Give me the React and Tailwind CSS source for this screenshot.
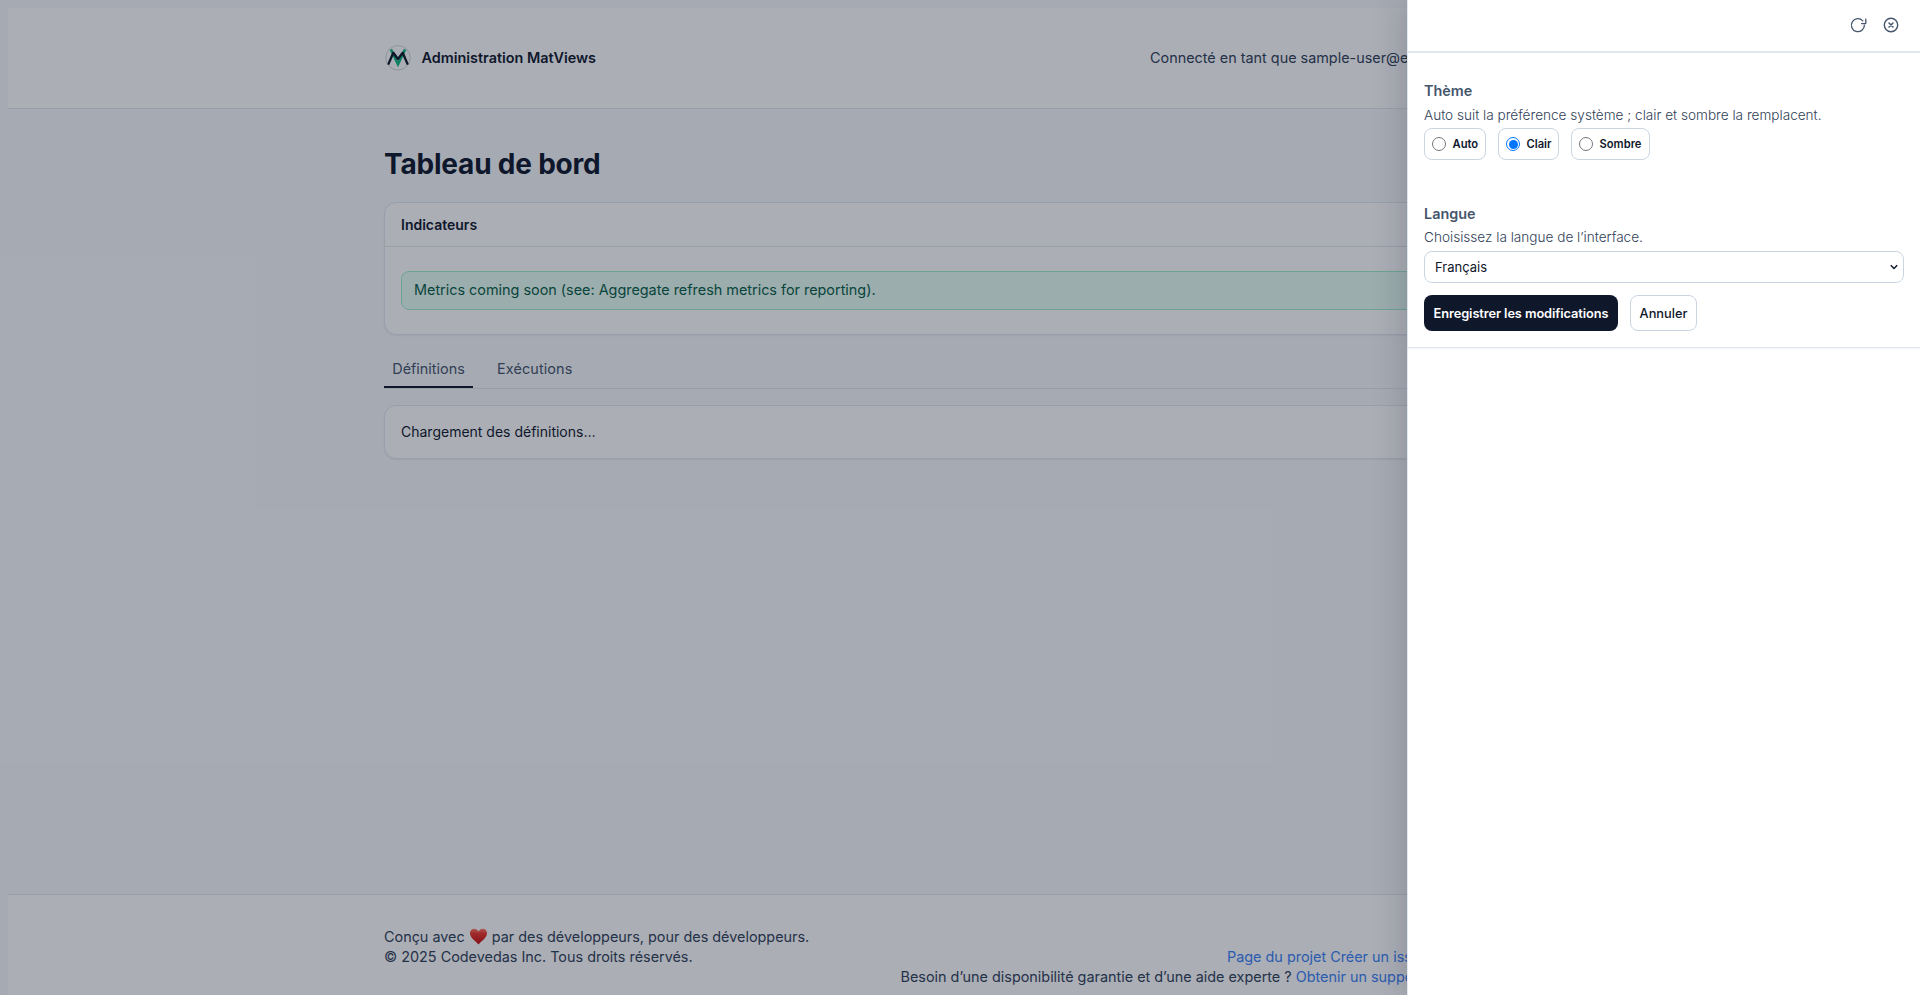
function Logo() {
  return (
    <svg className="size-7 shrink-0" viewBox="0 0 28 28" fill="none">
      <circle cx="14" cy="13.8" r="12.2" stroke="#d3d6dd" strokeWidth="1" />
      <path d="M6.9 5.4L14 20.2L21.1 5.4" stroke="#10b981" strokeWidth="2.6" />
      <path d="M4.2 20.6L9.3 8.8L14 15L18.7 8.8L23.8 20.6" stroke="#0f172a" strokeWidth="2.3" strokeLinejoin="round" />
    </svg>
  );
}

function Heart() {
  return (
    <svg className="mx-1 inline-block h-[17px] w-[19px] align-[-3px]" viewBox="0 0 19 18">
      <defs>
        <linearGradient id="heart" x1="0" y1="0" x2="0" y2="1">
          <stop offset="0" stopColor="#ff7d6b" />
          <stop offset="0.3" stopColor="#f0362c" />
          <stop offset="1" stopColor="#c00a0e" />
        </linearGradient>
      </defs>
      <path d="M9.5 17.5C7.5 14.5 0.5 11 0.5 5.5C0.5 2.5 2.5 0.8 5 0.8C7 0.8 8.7 2 9.5 3.8C10.3 2 12 0.8 14 0.8C16.5 0.8 18.5 2.5 18.5 5.5C18.5 11 11.5 14.5 9.5 17.5Z" fill="url(#heart)" />
    </svg>
  );
}

function ReloadIcon() {
  return (
    <svg className="size-[18px]" viewBox="0 0 18 18" fill="none" stroke="currentColor" strokeWidth="1.3" strokeLinecap="round" strokeLinejoin="round">
      <path d="M13.8 4.9A6.5 6.5 0 1 0 15.4 9.2" />
      <path d="M16.8 3.1V7.6H12.6" />
    </svg>
  );
}

function CloseIcon() {
  return (
    <svg className="size-[18px]" viewBox="0 0 18 18" fill="none" stroke="currentColor" strokeWidth="1.4" strokeLinecap="round">
      <circle cx="9" cy="9" r="6.7" />
      <path d="M7 7L11 11M11 7L7 11" strokeWidth="1.5" />
    </svg>
  );
}

function Radio({ label, checked, width }) {
  return (
    <label className={`flex h-8 items-center rounded-lg border border-slate-300 pl-[7px] text-[11.2px] font-semibold text-slate-900 ${width}`}>
      <span className={`mr-[6.5px] flex size-[14px] items-center justify-center rounded-full border ${checked ? "border-[#0075ff]" : "border-[#767676]"}`}>
        {checked && <span className="size-[9px] rounded-full bg-[#0075ff]" />}
      </span>
      {label}
    </label>
  );
}

export default function App() {
  return (
    <div className="relative h-[995px] w-[1920px] overflow-hidden bg-slate-50 font-['Inter',sans-serif] text-[14.4px] leading-[20.16px] text-slate-900">
      <div className="flex h-full flex-col px-2 pt-2">
        <header className="h-[101px] shrink-0 border-b border-slate-200 bg-white">
          <div className="mx-auto flex h-full w-[1152px] items-center justify-between">
            <div className="flex items-center gap-[9.6px]">
              <Logo />
              <span className="font-semibold">Administration MatViews</span>
            </div>
            <span className="w-[386px] whitespace-nowrap text-slate-700">Connecté en tant que sample-user@example.com</span>
          </div>
        </header>

        <main className="mx-auto w-[1152px] flex-1 pt-9">
          <h1 className="h-9 pt-px text-[28px] leading-9 font-bold tracking-[-0.2px]">Tableau de bord</h1>

          <section className="mt-[21px] h-[133px] rounded-xl border border-slate-200 bg-white shadow-[0_1px_2px_rgba(15,23,42,0.06)]">
            <h2 className="flex h-11 items-center border-b border-slate-200 px-4 pt-px text-[14px] font-semibold">Indicateurs</h2>
            <div className="px-4 pt-6">
              <div className="flex h-[39px] items-center rounded-lg border border-[#a0efcb] bg-[#e9fdf3] px-3 text-[#065f46]">
                Metrics coming soon (see: Aggregate refresh metrics for reporting).
              </div>
            </div>
          </section>

          <nav className="mt-[15px] flex h-[39px] gap-4 border-b border-slate-200 text-[14.4px] text-slate-600">
            <span className="flex w-[89px] items-center justify-center border-b-2 border-slate-900 pt-[2px]">Définitions</span>
            <span className="flex items-center px-2 tracking-[0.12px]">Exécutions</span>
          </nav>

          <section className="mt-4 flex h-[54px] items-center rounded-xl border border-slate-200 bg-white px-4 text-[14px] shadow-[0_1px_2px_rgba(15,23,42,0.06)]">
            Chargement des définitions…
          </section>
        </main>

        <footer className="h-[101px] shrink-0 border-t border-slate-200 bg-white">
          <div className="mx-auto flex w-[1152px] justify-between pt-8 text-slate-700">
            <div>
              <p className="h-[20px] whitespace-nowrap">Conçu avec<Heart />par des développeurs, pour des développeurs.</p>
              <p>© 2025 Codevedas Inc. Tous droits réservés.</p>
            </div>
            <div className="flex flex-col items-end pt-5 whitespace-nowrap">
              <p className="w-[309px] text-[#3b82f6]">Page du projet Créer un issue</p>
              <p className="w-[635.5px]">
                Besoin d’une disponibilité garantie et d’une aide experte ? <a className="text-[#3b82f6]">Obtenir un support</a>
              </p>
            </div>
          </div>
        </footer>
      </div>

      <div className="absolute inset-0 bg-[rgba(15,23,42,0.35)]" />

      <aside className="absolute inset-y-0 right-0 w-[513px] border-l border-slate-200 bg-white text-slate-600 shadow-[-4px_0_30px_rgba(15,23,42,0.18)]">
        <div className="flex h-[53px] items-center justify-end gap-[15px] border-b-2 border-slate-200 pr-5 pb-px">
          <ReloadIcon />
          <CloseIcon />
        </div>
        <div className="h-[295px] border-b border-slate-200 px-4 pt-7 shadow-[0_1px_2px_rgba(15,23,42,0.06)]">
          <h3 className="font-semibold">Thème</h3>
          <p className="mt-[4px] text-[13.6px] font-light text-slate-700">Auto suit la préférence système ; clair et sombre la remplacent.</p>
          <div className="mt-[3px] flex gap-3">
            <Radio label="Auto" width="w-[62px]" />
            <Radio label="Clair" checked width="w-[61px]" />
            <Radio label="Sombre" width="w-[79px]" />
          </div>
          <h3 className="mt-[44px] font-semibold">Langue</h3>
          <p className="mt-[3px] text-[13.6px] font-light text-slate-700">Choisissez la langue de l’interface.</p>
          <div className="mt-[3px] flex h-8 items-center justify-between rounded-lg border border-slate-300 pr-[5px] pl-[10px] text-[13px] text-slate-900">
            Français
            <svg className="size-2" viewBox="0 0 8 8" fill="none" stroke="currentColor" strokeWidth="1.5"><path d="M0.8 2.3L4 5.5L7.2 2.3" /></svg>
          </div>
          <div className="mt-3 flex gap-3 text-[12.8px] font-medium">
            <button className="h-9 w-[194px] rounded-lg bg-slate-900 pt-[3px] font-semibold tracking-[-0.08px] whitespace-nowrap text-white">Enregistrer les modifications</button>
            <button className="h-9 w-[67px] rounded-lg border border-slate-300 pt-[3px] text-slate-900">Annuler</button>
          </div>
        </div>
      </aside>
    </div>
  );
}
